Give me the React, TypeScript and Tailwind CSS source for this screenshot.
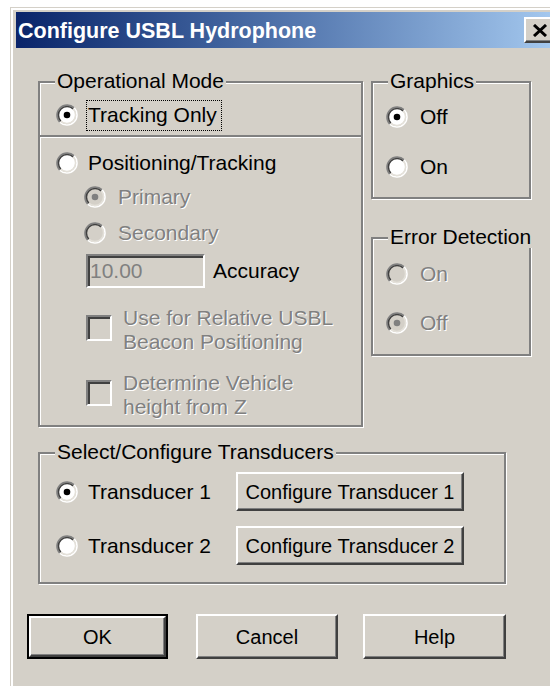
import React from "react";

type RadioProps = { checked?: boolean; disabled?: boolean };

// Classic 3D radio button: dark upper-left rim, light lower-right rim.
function Radio({ checked, disabled }: RadioProps) {
  const c = 11;
  const pt = (r: number, deg: number) => {
    const a = (deg * Math.PI) / 180;
    return `${(c + r * Math.cos(a)).toFixed(2)} ${(c + r * Math.sin(a)).toFixed(2)}`;
  };
  const arc = (r: number, from: number, to: number) =>
    `M ${pt(r, from)} A ${r} ${r} 0 0 1 ${pt(r, to)}`;
  return (
    <svg width="22" height="22" viewBox="0 0 22 22" className="shrink-0">
      <circle cx={c} cy={c} r={8.2} fill={disabled ? "#d4d0c8" : "#ffffff"} />
      <path d={arc(10.2, 135, 315)} stroke="#808080" strokeWidth="1.6" fill="none" />
      <path d={arc(10.2, -45, 135)} stroke="#ffffff" strokeWidth="1.6" fill="none" />
      <path d={arc(8.7, 135, 315)} stroke="#404040" strokeWidth="1.5" fill="none" />
      <path d={arc(8.7, -45, 135)} stroke="#e4e1da" strokeWidth="1.5" fill="none" />
      {checked && <circle cx={c} cy={c} r={3.3} fill={disabled ? "#808080" : "#000000"} />}
    </svg>
  );
}

function Checkbox() {
  return (
    <div className="w-[26px] h-[26px] shrink-0 bg-[#d4d0c8] border-2 border-t-[#808080] border-l-[#808080] border-b-white border-r-white shadow-[inset_2px_2px_0_#404040]" />
  );
}

function Group({
  title,
  className = "",
  children,
}: {
  title: string;
  className?: string;
  children?: React.ReactNode;
}) {
  return (
    <div
      className={`relative border-2 border-[#808080] shadow-[inset_1px_1px_0_#fff,1px_1px_0_#fff] ${className}`}
    >
      <span className="absolute left-[15px] top-[-13px] px-[2px] bg-[#d4d0c8] leading-[22px] whitespace-nowrap">
        {title}
      </span>
      {children}
    </div>
  );
}

const raised =
  "bg-[#d4d0c8] border-2 border-t-white border-l-white border-b-[#404040] border-r-[#404040] shadow-[inset_-1px_-1px_0_#808080]";

function Button({
  children,
  className = "",
  isDefault,
}: {
  children: React.ReactNode;
  className?: string;
  isDefault?: boolean;
}) {
  if (isDefault) {
    return (
      <div className={`border-2 border-black ${className}`}>
        <div className={`${raised} w-full h-full flex items-center justify-center text-[20px]`}>
          {children}
        </div>
      </div>
    );
  }
  return (
    <div className={`${raised} flex items-center justify-center text-[20px] ${className}`}>
      {children}
    </div>
  );
}

const dim = "text-[#808080] [text-shadow:1px_1px_0_#fff]";

function OptionRow({
  label,
  checked,
  disabled,
  className = "",
  gap = "ml-[10px]",
}: {
  label: string;
  checked?: boolean;
  disabled?: boolean;
  className?: string;
  gap?: string;
}) {
  return (
    <div className={`flex items-center h-[32px] ${className}`}>
      <Radio checked={checked} disabled={disabled} />
      <span className={`${gap} whitespace-nowrap ${disabled ? dim : ""}`}>{label}</span>
    </div>
  );
}

export default function App() {
  return (
    <div className="w-[550px] h-[686px] overflow-hidden bg-white pl-[10px] pt-[7px] font-['Liberation_Sans',Arial,sans-serif] text-[21px] text-black">
      <div className="w-[552px] h-[700px] bg-[#d4d0c8] border-l border-t border-[#d4d0c8]">
        <div className="h-full border-l-2 border-t-2 border-white pl-[3px] pt-[2px] pr-[3px]">
          {/* caption bar */}
          <div className="h-[36px] flex items-center justify-between bg-linear-to-r from-[#0a246a] to-[#a6caf0] pl-[2px] pr-[3px]">
            <span className="mt-[3px] text-white font-bold text-[21.5px] leading-none">
              Configure USBL Hydrophone
            </span>
            <div className={`${raised} w-[32px] h-[26px] flex items-center justify-center`}>
              <svg width="16" height="13" viewBox="0 0 16 13">
                <path d="M2 1 L14 12 M14 1 L2 12" stroke="#000" strokeWidth="3" fill="none" />
              </svg>
            </div>
          </div>

          {/* client area */}
          <div className="pl-[22px] pt-[33px]">
            <div className="flex items-start gap-[8px]">
              <Group title="Operational Mode" className="w-[325px] pb-[6px]">
                <div className="flex items-center h-[36px] mt-[14px] pl-[16px]">
                  <Radio checked />
                  <span className="ml-[8px] w-[136px] h-[31px] px-[1px] border border-dotted border-black flex items-center overflow-hidden whitespace-nowrap">
                    Tracking Only
                  </span>
                </div>
                <div className="mt-[2px] h-[2px] bg-[#808080] shadow-[0_1px_0_#fff]" />
                <OptionRow label="Positioning/Tracking" className="mt-[10px] pl-[16px]" />
                <OptionRow label="Primary" checked disabled className="mt-[2px] pl-[44px]" gap="ml-[12px]" />
                <OptionRow label="Secondary" disabled className="mt-[4px] pl-[44px]" gap="ml-[12px]" />
                <div className="mt-[5px] h-[34px] pl-[46px] flex items-center">
                  <div className="w-[119px] h-[34px] bg-[#d4d0c8] border-2 border-t-[#808080] border-l-[#808080] border-b-white border-r-white shadow-[inset_2px_2px_0_#404040] flex items-center pl-[2px] text-[#808080]">
                    10.00
                  </div>
                  <span className="ml-[8px]">Accuracy</span>
                </div>
                <div className="mt-[18px] pl-[46px] flex items-start">
                  <div className="mt-[9px]">
                    <Checkbox />
                  </div>
                  <span className={`ml-[11px] leading-[24px] ${dim}`}>
                    Use for Relative USBL
                    <br />
                    Beacon Positioning
                  </span>
                </div>
                <div className="mt-[17px] pl-[46px] flex items-start">
                  <div className="mt-[9px]">
                    <Checkbox />
                  </div>
                  <span className={`ml-[11px] leading-[24px] ${dim}`}>
                    Determine Vehicle
                    <br />
                    height from Z
                  </span>
                </div>
              </Group>

              <div className="w-[160px] flex flex-col">
                <Group title="Graphics" className="h-[118px] pl-[13px]">
                  <OptionRow label="Off" checked className="mt-[18px]" gap="ml-[12px]" />
                  <OptionRow label="On" className="mt-[18px]" gap="ml-[12px]" />
                </Group>
                <Group title="Error Detection" className="mt-[38px] h-[119px] pl-[13px]">
                  <OptionRow label="On" disabled className="mt-[19px]" gap="ml-[12px]" />
                  <OptionRow label="Off" checked disabled className="mt-[17px]" gap="ml-[12px]" />
                </Group>
              </div>
            </div>

            <Group title="Select/Configure Transducers" className="mt-[25px] w-[468px] h-[132px] pl-[16px]">
              <div className="mt-[18px] h-[39px] flex items-center">
                <Radio checked />
                <span className="ml-[10px] w-[148px] whitespace-nowrap">Transducer 1</span>
                <Button className="w-[228px] h-[39px]">Configure Transducer 1</Button>
              </div>
              <div className="mt-[15px] h-[39px] flex items-center">
                <Radio />
                <span className="ml-[10px] w-[148px] whitespace-nowrap">Transducer 2</span>
                <Button className="w-[228px] h-[39px]">Configure Transducer 2</Button>
              </div>
            </Group>

            <div className="-ml-[11px] mt-[30px] flex">
              <Button isDefault className="w-[141px] h-[45px]">OK</Button>
              <Button className="ml-[28px] w-[142px] h-[45px]">Cancel</Button>
              <Button className="ml-[25px] w-[143px] h-[45px]">Help</Button>
            </div>
          </div>
        </div>
      </div>
    </div>
  );
}
